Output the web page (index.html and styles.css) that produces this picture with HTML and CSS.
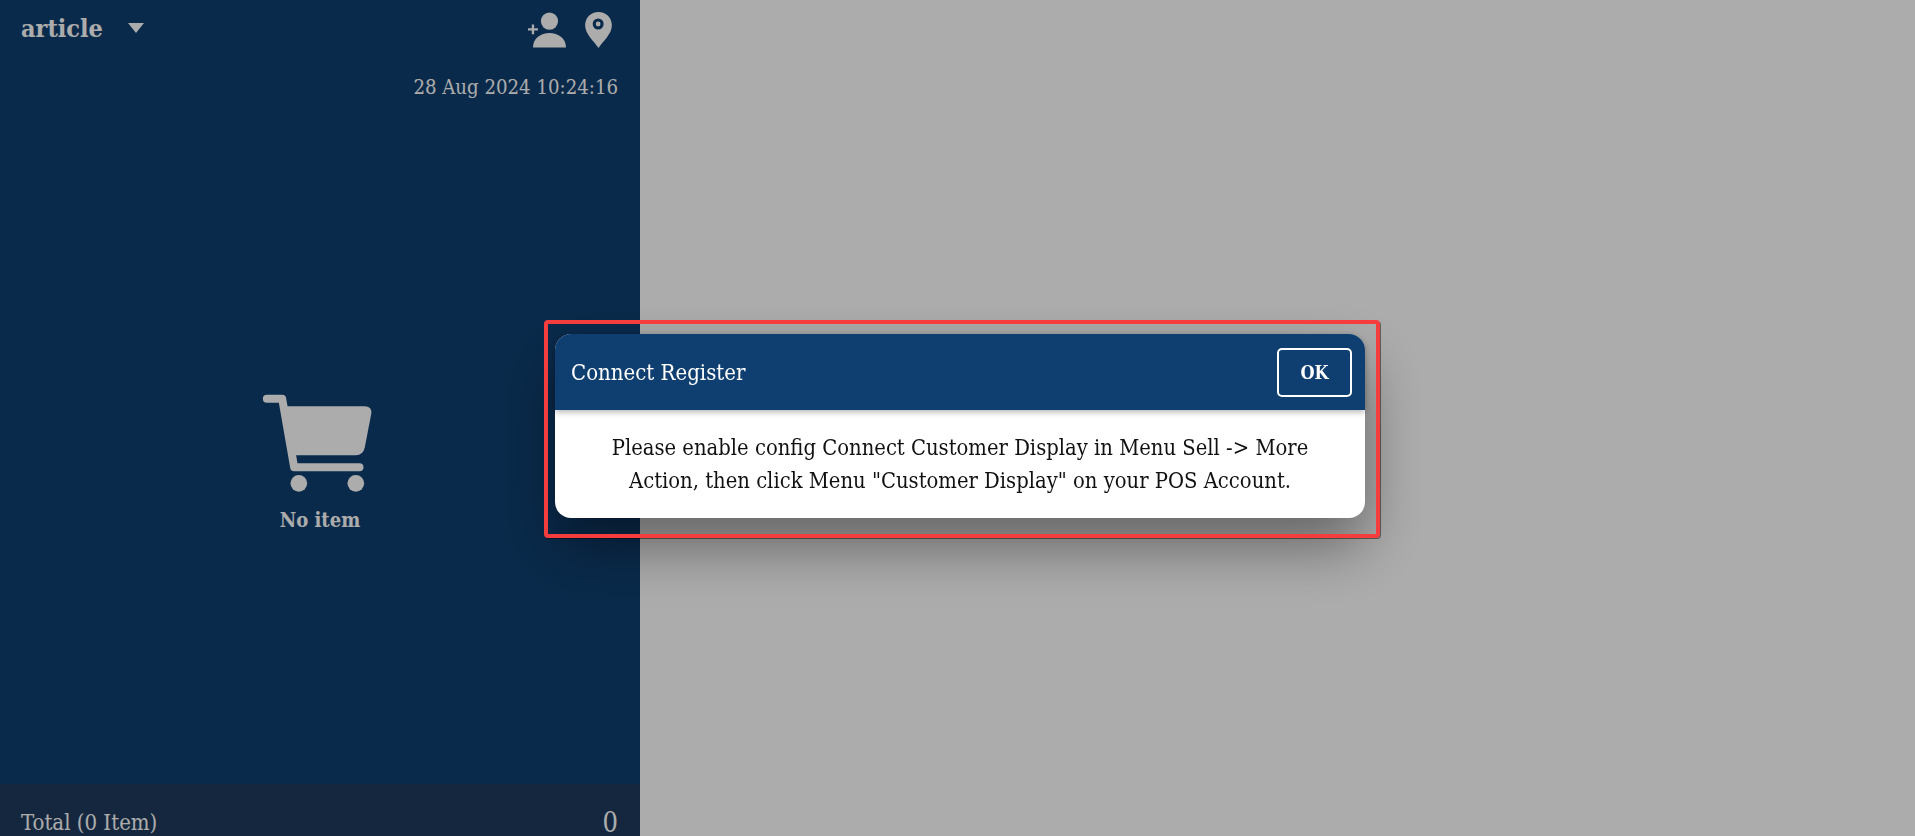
FILE: index.html
```html
<!DOCTYPE html>
<html lang="en">
<head>
    <meta charset="UTF-8">
    <meta name="viewport" content="width=device-width, initial-scale=1.0">
    <title>Customer Display</title>
    <link rel="stylesheet" href="styles.css">
</head>
<body>
    <div class="panel">
        <div class="topbar">
            <div class="outlet">
                <span class="outlet-name">article</span>
                <span class="caret"></span>
            </div>
            <div class="top-icons">
                <svg class="icon-user" viewBox="25 18 115 108">
                    <circle cx="90" cy="45" r="26"/>
                    <path d="M40 125c0-28 24-44 50-44s50 16 50 44z"/>
                    <path d="M40 55v30M25 70h30" class="plus"/>
                </svg>
                <svg class="icon-pin" viewBox="196 22 78 105">
                    <path fill-rule="evenodd" d="M235 22c-22 0-39 17-39 39 0 26 26 47 39 66 13-19 39-40 39-66 0-22-17-39-39-39zM234 41a16 16 0 1 1 0 32 16 16 0 0 1 0-32zM234 50a7 7 0 1 0 0 14 7 7 0 0 0 0-14z"/>
                </svg>
            </div>
        </div>
        <div class="clock">28 Aug 2024 10:24:16</div>
        <div class="empty">
            <svg class="icon-cart" viewBox="65 35 335 300">
                <path class="cart-frame" d="M82 52h46l36 206h196"/>
                <path d="M137 75H375Q399 75 395 99L376 198Q371 222 349 222H165Z"/>
                <circle cx="178" cy="306" r="25"/>
                <circle cx="349" cy="306" r="25"/>
            </svg>
            <div class="empty-text">No item</div>
        </div>
        <div class="total">
            <span>Total (0 Item)</span>
            <span class="total-value">0</span>
        </div>
    </div>

    <div class="overlay">
        <div class="modal">
            <div class="modal-head">
                <span class="modal-title">Connect Register</span>
                <button class="ok-btn">OK</button>
            </div>
            <div class="modal-body">
                Please enable config Connect Customer Display in Menu Sell -&gt; More Action, then click Menu "Customer Display" on your POS Account.
            </div>
            <div class="highlight"></div>
        </div>
    </div>
</body>
</html>
```

FILE: styles.css
```css
html, body {
    height: 100%;
}
body {
    font-family: "DejaVu Serif", "Liberation Serif", serif;
    font-stretch: condensed;
    background-color: #fff;
    margin: 0;
    overflow: hidden;
    display: flex;
}
.panel {
    width: 640px;
    height: 100%;
    background-color: #0f3f70;
    color: #fff;
    display: flex;
    flex-direction: column;
}
.topbar {
    display: flex;
    justify-content: space-between;
    align-items: flex-start;
    padding: 12px 28px 0 21px;
}
.outlet {
    display: flex;
    align-items: center;
    height: 32px;
}
.outlet-name {
    font-size: 25px;
    font-weight: bold;
}
.caret {
    width: 0;
    height: 0;
    margin-left: 25px;
    border-left: 8px solid transparent;
    border-right: 8px solid transparent;
    border-top: 10px solid #fff;
}
.top-icons {
    display: flex;
    gap: 19px;
}
.top-icons svg {
    display: block;
    height: 36px;
    fill: #fff;
}
.icon-user {
    width: 38px;
}
.icon-pin {
    width: 27px;
}
.plus {
    fill: none;
    stroke: #fff;
    stroke-width: 7;
}
.clock {
    margin-top: 27px;
    padding-right: 22px;
    text-align: right;
    font-size: 20.2px;
}
.empty {
    flex: 1;
    display: flex;
    flex-direction: column;
    align-items: center;
    padding-top: 294px;
}
.icon-cart {
    width: 112px;
    height: 100px;
    margin-right: 7px;
    fill: #fff;
}
.cart-frame {
    fill: none;
    stroke: #fff;
    stroke-width: 24;
    stroke-linecap: round;
    stroke-linejoin: round;
}
.empty-text {
    margin-top: 15px;
    font-size: 20px;
    font-weight: bold;
}
.total {
    height: 52px;
    box-sizing: border-box;
    padding: 26px 22px 0 21px;
    background-color: #1f3b5d;
    display: flex;
    justify-content: space-between;
    font-size: 22px;
    line-height: 26px;
}
.total-value {
    font-size: 27px;
}
.overlay {
    position: fixed;
    inset: 0;
    background-color: rgba(0, 0, 0, 0.325);
    padding: 334px 0 0 555px;
}
.modal {
    position: relative;
    width: 810px;
    height: 184px;
    border-radius: 16px;
    background-color: #fff;
    box-shadow: 0 28px 60px rgba(0, 0, 0, 0.42);
}
.modal-head {
    height: 76px;
    box-sizing: border-box;
    padding: 0 13px 0 16px;
    background-color: #0f3f70;
    border-radius: 16px 16px 0 0;
    color: #fff;
    display: flex;
    justify-content: space-between;
    align-items: center;
    box-shadow: 0 2px 6px rgba(0, 0, 0, 0.3);
}
.modal-title {
    font-size: 22px;
}
.ok-btn {
    width: 75px;
    height: 49px;
    border: 2px solid #fff;
    border-radius: 5px;
    background: none;
    color: #fff;
    font-family: inherit;
    font-stretch: inherit;
    font-size: 18px;
    font-weight: bold;
}
.modal-body {
    padding: 21px 40px 0;
    text-align: center;
    font-size: 21.8px;
    line-height: 33px;
    color: #111;
}
.highlight {
    position: absolute;
    top: -14px;
    left: -11px;
    right: -15px;
    bottom: -20px;
    border: 4px solid #f53d3d;
    border-radius: 4px;
    box-shadow: 1px 1px 0 rgba(0, 0, 0, 0.45);
}
```
